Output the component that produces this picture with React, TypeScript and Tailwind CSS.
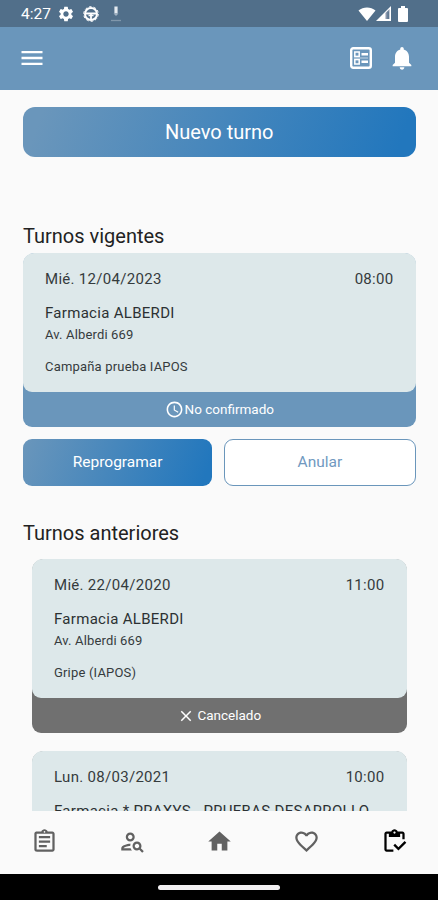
import type { ReactNode } from 'react';
import {
  MdAccessTime,
  MdClose,
  MdFavoriteBorder,
  MdHome,
  MdMenu,
  MdNotifications,
  MdOutlineAssignment,
  MdOutlineInventory,
  MdOutlinePersonSearch,
  MdSettings
} from 'react-icons/md';

type Turno = {
  fecha: string;
  hora: string;
  lugar: string;
  direccion?: string;
  campania?: string;
};

const vigente: Turno = {
  fecha: 'Mié. 12/04/2023',
  hora: '08:00',
  lugar: 'Farmacia ALBERDI',
  direccion: 'Av. Alberdi 669',
  campania: 'Campaña prueba IAPOS'
};

const anteriores: Turno[] = [
  {
    fecha: 'Mié. 22/04/2020',
    hora: '11:00',
    lugar: 'Farmacia ALBERDI',
    direccion: 'Av. Alberdi 669',
    campania: 'Gripe (IAPOS)'
  },
  {
    fecha: 'Lun. 08/03/2021',
    hora: '10:00',
    lugar: 'Farmacia * PRAXYS - PRUEBAS DESARROLLO'
  }
];

export default function App() {
  return (
    <div className="w-full h-[900px] flex flex-col overflow-hidden bg-[#fafafa] font-['Roboto',sans-serif] text-[#222]">
      <StatusBar />

      <header className="h-[62.5px] shrink-0 flex items-center bg-[#6a96bb] pl-[18px] pr-[22px] text-white">
        <MdMenu size={28} />
        <BallotIcon />
        <MdNotifications size={28} className="ml-[16px]" />
      </header>

      <main className="flex-1 min-h-0 overflow-hidden pl-[23px] pr-[22.5px] pt-[17px]">
        <button className="block w-full h-[50px] rounded-[12px] bg-linear-[110deg,#6a96bb_5%,#2277bd_95%] text-white text-[20px]">
          Nuevo turno
        </button>

        <h2 className="mt-[66px] text-[20px] leading-[26px]">Turnos vigentes</h2>
        <div className="mt-1">
          <TurnoCard turno={vigente} color="bg-[#6a96bb]">
            <MdAccessTime size={19} className="mr-px" />
            No confirmado
          </TurnoCard>
        </div>

        <div className="mt-3 flex gap-3">
          <button className="flex-1 h-[47px] rounded-[9px] bg-linear-[110deg,#6a96bb_0%,#2277bd_95%] pt-px text-white text-[15.5px]">
            Reprogramar
          </button>
          <button className="flex-1 h-[47px] rounded-[9px] border border-[#6a96bb] bg-white pt-px text-[#7199bf] text-[15.5px]">
            Anular
          </button>
        </div>

        <h2 className="mt-[34px] text-[20px] leading-[26px]">Turnos anteriores</h2>
        <div className="mt-[13px] mx-[9px] flex flex-col gap-[18.5px]">
          {anteriores.map((turno) => (
            <TurnoCard key={turno.fecha} turno={turno} color="bg-[#707070]">
              <MdClose size={18} className="mr-0.5" />
              Cancelado
            </TurnoCard>
          ))}
        </div>
      </main>

      <nav className="h-[63px] shrink-0 grid grid-cols-5 place-items-center pl-px pb-[3px] bg-[#fafafa] text-[#616161]">
        <MdOutlineAssignment size={27} />
        <MdOutlinePersonSearch size={27} />
        <MdHome size={27} />
        <MdFavoriteBorder size={27} />
        <MdOutlineInventory size={27} className="text-black" />
      </nav>

      <div className="h-[26px] shrink-0 flex items-center justify-center bg-black">
        <div className="w-[122px] h-[5px] rounded-full bg-[#f2f0f2]" />
      </div>
    </div>
  );
}

function BallotIcon() {
  return (
    <svg viewBox="0 0 22 22" className="ml-auto w-[22px] h-[22px]" fill="none" stroke="white">
      <rect x="1.2" y="1.2" width="19.6" height="19.6" rx="2" strokeWidth="2.4" />
      <rect x="4.8" y="5" width="4.400" height="4.400" strokeWidth="1.500" />
      <rect x="4.8" y="12.600" width="4.400" height="4.400" strokeWidth="1.500" />
      <path d="M11.500 7.200h6.500M11.500 14.800h6.500" strokeWidth="2.600" />
      <path d="M4 11h14" strokeWidth=".6" />
    </svg>
  );
}

function StatusBar() {
  return (
    <div className="h-[27px] shrink-0 flex items-center bg-[#516f8a] pl-[21px] pr-[30px] text-white">
      <span className="pt-[2px] text-[15.5px]">4:27</span>
      <MdSettings size={18} className="ml-[6px]" />
      <svg viewBox="0 0 16 16" className="ml-2 w-4 h-4" fill="none" stroke="currentColor">
        <circle cx="8" cy="8" r="6" strokeWidth="2" />
        <circle cx="8" cy="8" r="7.3" strokeWidth="1" strokeDasharray="2.6 2" />
        <path d="M2.500 7.500h11M8 8v5.500" strokeWidth="1.800" />
        <path d="M5.500 9.500h5" strokeWidth="1.500" />
      </svg>
      <svg viewBox="0 0 12 16" className="ml-[11px] w-3 h-4" fill="none">
        <path d="M6 .5v7" stroke="#e4eaf0" strokeWidth="3.200" />
        <path d="M3.500 7.500h5L6 10z" fill="#9fb1c2" />
        <path d="M1 14.500h10" stroke="#8197ab" strokeWidth="1.300" />
      </svg>
      <svg viewBox="0 0 18 14" className="ml-auto w-[18px] h-[14px]" fill="currentColor">
        <path d="M9 14 .5 3.600C3 1.400 5.800 .5 9 .5s6 .9 8.500 3.100z" />
      </svg>
      <svg viewBox="0 0 15 15" className="w-[15px] h-[15px]">
        <path d="M0 15 15 0v15z" fill="white" />
        <path d="M9.500 13V7l4-4v10z" fill="#8795ab" />
        <path d="M11.500 5.500h1.200v7.500h-1.200z" fill="#516f8a" />
      </svg>
      <svg viewBox="0 0 10 16" className="ml-[7px] w-[10px] h-4" fill="currentColor">
        <path d="M3 0h4v2h2q1 0 1 1v12q0 1-1 1H1q-1 0-1-1V3q0-1 1-1h2z" />
      </svg>
    </div>
  );
}

function TurnoCard({ turno, color, children }: { turno: Turno; color: string; children: ReactNode }) {
  return (
    <article className={`h-[174px] shrink-0 flex flex-col rounded-t-[12px] rounded-b-[9px] ${color}`}>
      <div className="h-[139px] rounded-t-[11px] rounded-b-[9px] bg-[#dde8ea] px-[22px] pt-4">
        <div className="flex justify-between text-[15px] leading-5 tracking-[0.3px] text-[#353b3d]">
          <span>{turno.fecha}</span>
          <span>{turno.hora}</span>
        </div>
        <p className="mt-[14px] text-[15px] leading-5 tracking-[0.3px] whitespace-nowrap text-[#2c3133]">{turno.lugar}</p>
        <p className="mt-[3px] text-[13px] leading-[18px] tracking-[0.15px] text-[#353b3d]">{turno.direccion}</p>
        <p className="mt-[14px] text-[13px] leading-[18px] tracking-[0.18px] text-[#353b3d]">{turno.campania}</p>
      </div>
      <div className="flex-1 flex items-center justify-center pt-px text-white text-[13.5px]">{children}</div>
    </article>
  );
}
